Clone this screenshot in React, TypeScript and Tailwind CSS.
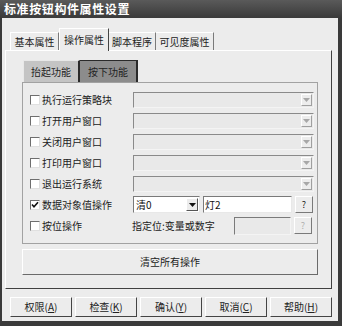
import React from "react";

const font = "font-['Noto_Sans_CJK_SC','Noto_Sans',sans-serif]";

function Check({ checked = false }: { checked?: boolean }) {
  return (
    <div className="w-[10px] h-[10px] bg-white border-t border-l border-t-[#6e6e6e] border-l-[#6e6e6e] border-r border-b border-r-[#e0e0e0] border-b-[#e0e0e0] flex items-center justify-center">
      {checked && (
        <svg width="8" height="8" viewBox="0 0 8 8">
          <path d="M1 3.5 L3 5.8 L7 1.2" stroke="#111" strokeWidth="1.6" fill="none" />
        </svg>
      )}
    </div>
  );
}

function Arrow({ color }: { color: string }) {
  return (
    <svg width="7" height="4" viewBox="0 0 7 4">
      <path d="M0 0 H7 L3.5 4 Z" fill={color} />
    </svg>
  );
}

function DisabledSelect() {
  return (
    <div className="w-[181px] h-[16px] bg-[#e9e9e9] border border-t-[#8a8a8a] border-l-[#8a8a8a] border-r-[#f4f4f4] border-b-[#f4f4f4] flex justify-end items-center pr-[1px]">
      <div className="w-[11px] h-[12px] bg-[#ededed] border border-t-white border-l-white border-r-[#a0a0a0] border-b-[#a0a0a0] flex items-center justify-center">
        <Arrow color="#a8a8a8" />
      </div>
    </div>
  );
}

function Row({
  label,
  checked,
  children,
}: {
  label: string;
  checked?: boolean;
  children?: React.ReactNode;
}) {
  return (
    <div className="h-[21px] flex items-center pl-[7px]">
      <Check checked={checked} />
      <div className="w-[91px] ml-[2px] text-[10px] text-[#222] leading-none">{label}</div>
      {children}
    </div>
  );
}

function QButton({ disabled = false }: { disabled?: boolean }) {
  return (
    <div
      className={`w-[18px] h-[17px] bg-[#ececec] border border-t-white border-l-white border-r-[#7a7a7a] border-b-[#7a7a7a] flex items-center justify-center text-[9px] leading-none ${
        disabled ? "text-[#b0b0b0]" : "text-[#222]"
      }`}
    >
      ?
    </div>
  );
}

function BottomButton({ text, k }: { text: string; k: string }) {
  return (
    <div className="w-[62px] h-[20px] bg-[#ececec] border border-t-white border-l-white border-r-[#444] border-b-[#444] flex items-center justify-center text-[10px] text-[#222] leading-none">
      {text}(<span className="underline">{k}</span>)
    </div>
  );
}

export default function App() {
  const rows = ["执行运行策略块", "打开用户窗口", "关闭用户窗口", "打印用户窗口", "退出运行系统"];
  return (
    <div className={`w-[342px] h-[326px] bg-[#3a3a3a] flex flex-col ${font}`}>
      <div className="h-[18px] shrink-0 bg-gradient-to-b from-[#5a5a5a] to-[#3a3a3a] flex items-center pl-[4px] text-white text-[12px] font-bold tracking-[0.6px] leading-none">
        标准按钮构件属性设置
      </div>
      <div className="flex-1 ml-[2px] mr-[4px] mb-[5px] bg-[#ececec] flex flex-col pt-[10px]">
        {/* main tabs */}
        <div className="flex items-end ml-[8px] h-[22px] text-[10px] text-[#222] leading-none">
          <div className="w-[49px] h-[18px] border-t border-l border-t-white border-l-white border-r border-r-[#7a7a7a] flex items-center justify-center">
            基本属性
          </div>
          <div className="relative z-10 w-[50px] h-[23px] -mb-[1px] bg-[#ececec] border-t border-l border-t-white border-l-white border-r border-r-[#444] flex items-center justify-center pb-[1px]">
            操作属性
          </div>
          <div className="w-[47px] h-[18px] border-t border-t-white border-r border-r-[#7a7a7a] flex items-center justify-center">
            脚本程序
          </div>
          <div className="w-[58px] h-[18px] border-t border-t-white border-r border-r-[#7a7a7a] flex items-center justify-center">
            可见度属性
          </div>
        </div>
        {/* tab panel */}
        <div className="ml-[3px] w-[327px] h-[239px] border border-t-white border-l-white border-r-[#404040] border-b-[#404040] pt-[9px] pl-[16px]">
          <div className="flex ml-[1px] h-[22px] text-[10px] text-[#222] leading-none">
            <div className="w-[57px] h-[22px] bg-[#c4c4c4] border-t border-l border-t-[#e8e8e8] border-l-[#e8e8e8] border-r-2 border-r-[#2a2a2a] flex items-center justify-center">
              抬起功能
            </div>
            <div className="w-[58px] h-[22px] bg-[#8c8c8c] border-t border-t-[#2a2a2a] border-r-2 border-r-[#2a2a2a] flex items-center justify-center">
              按下功能
            </div>
          </div>
          <div className="w-[296px] h-[162px] border border-[#a2a2a2] pt-[6px]">
            {rows.map((r) => (
              <Row key={r} label={r}>
                <DisabledSelect />
              </Row>
            ))}
            <Row label="数据对象值操作" checked>
              <div className="w-[67px] h-[17px] bg-white border border-t-[#7a7a7a] border-l-[#7a7a7a] border-r-[#e8e8e8] border-b-[#e8e8e8] flex items-center justify-between pl-[2px] pr-[1px] text-[10px] text-[#111] leading-none">
                <span>清0</span>
                <div className="w-[12px] h-[13px] bg-[#ececec] border border-t-white border-l-white border-r-[#555] border-b-[#555] flex items-center justify-center">
                  <Arrow color="#111" />
                </div>
              </div>
              <div className="ml-[3px] w-[89px] h-[17px] bg-white border border-t-[#7a7a7a] border-l-[#7a7a7a] border-r-[#e8e8e8] border-b-[#e8e8e8] flex items-center pl-[1px] text-[10px] text-[#111] leading-none">
                灯2
              </div>
              <div className="ml-[3px]">
                <QButton />
              </div>
            </Row>
            <Row label="按位操作">
              <div className="w-[102px] -ml-[1px] text-[10px] text-[#222] leading-none">指定位:变量或数字</div>
              <div className="w-[57px] h-[18px] bg-[#e9e9e9] border border-t-[#7a7a7a] border-l-[#7a7a7a] border-r-[#f4f4f4] border-b-[#f4f4f4]" />
              <div className="ml-[3px]">
                <QButton disabled />
              </div>
            </Row>
          </div>
          <div className="mt-[5px] w-[296px] h-[26px] bg-[#ececec] border border-t-white border-l-white border-r-[#6a6a6a] border-b-[#6a6a6a] flex items-center justify-center text-[10px] text-[#222] leading-none">
            清空所有操作
          </div>
        </div>
        {/* bottom buttons */}
        <div className="mt-[8px] ml-[8px] flex gap-[3px]">
          <BottomButton text="权限" k="A" />
          <BottomButton text="检查" k="K" />
          <BottomButton text="确认" k="Y" />
          <BottomButton text="取消" k="C" />
          <BottomButton text="帮助" k="H" />
        </div>
      </div>
    </div>
  );
}
